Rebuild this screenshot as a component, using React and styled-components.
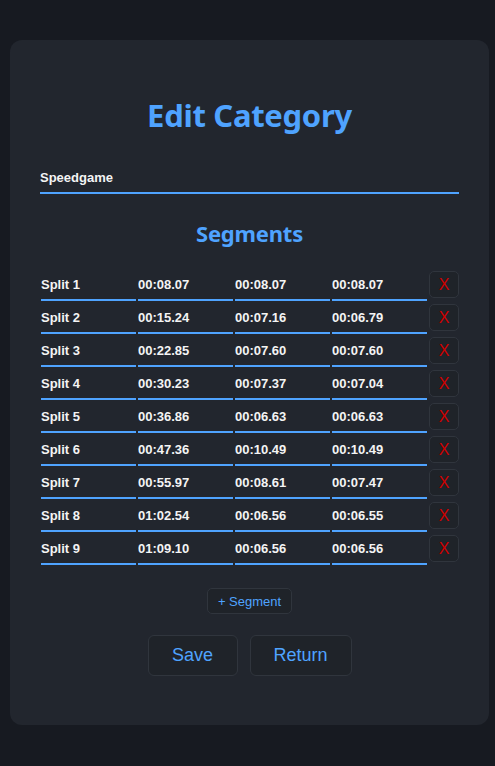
import React, { useState } from "react"
import styled, { createGlobalStyle } from "styled-components"

const GlobalStyle = createGlobalStyle`
  html, body {
    margin: 0;
    padding: 0;
    background: #171a21;
    min-height: 100%;
  }
  body {
    font-family: "Liberation Sans", Arial, sans-serif;
  }
`

const initialSplits = [
  { name: "Split 1", total: "00:08.07", seg: "00:08.07", best: "00:08.07" },
  { name: "Split 2", total: "00:15.24", seg: "00:07.16", best: "00:06.79" },
  { name: "Split 3", total: "00:22.85", seg: "00:07.60", best: "00:07.60" },
  { name: "Split 4", total: "00:30.23", seg: "00:07.37", best: "00:07.04" },
  { name: "Split 5", total: "00:36.86", seg: "00:06.63", best: "00:06.63" },
  { name: "Split 6", total: "00:47.36", seg: "00:10.49", best: "00:10.49" },
  { name: "Split 7", total: "00:55.97", seg: "00:08.61", best: "00:07.47" },
  { name: "Split 8", total: "01:02.54", seg: "00:06.56", best: "00:06.55" },
  { name: "Split 9", total: "01:09.10", seg: "00:06.56", best: "00:06.56" },
]

const App = () => {
  const [title, setTitle] = useState("Speedgame")
  const [splits, setSplits] = useState(initialSplits)

  const update = (i, key, value) => {
    setSplits(splits.map((s, j) => (j === i ? { ...s, [key]: value } : s)))
  }

  return (
    <>
      <GlobalStyle />
      <Page>
        <Card>
          <Title>Edit Category</Title>
          <NameInput value={title} onChange={e => setTitle(e.target.value)} />
          <Subtitle>Segments</Subtitle>
          <SplitList>
            {splits.map((s, i) => (
              <SplitRow key={i}>
                <Cell value={s.name} onChange={e => update(i, "name", e.target.value)} />
                <Cell value={s.total} onChange={e => update(i, "total", e.target.value)} />
                <Cell value={s.seg} onChange={e => update(i, "seg", e.target.value)} />
                <Cell value={s.best} onChange={e => update(i, "best", e.target.value)} />
                <DeleteButton onClick={() => setSplits(splits.filter((_, j) => j !== i))}>X</DeleteButton>
              </SplitRow>
            ))}
          </SplitList>
          <AddButton
            onClick={() =>
              setSplits([...splits, { name: `Split ${splits.length + 1}`, total: "", seg: "", best: "" }])
            }
          >
            + Segment
          </AddButton>
          <Actions>
            <ActionButton>Save</ActionButton>
            <ActionButton wide>Return</ActionButton>
          </Actions>
        </Card>
      </Page>
    </>
  )
}

const Page = styled.div`
  min-height: 766px;
  box-sizing: border-box;
  padding: 40px 6px 0 10px;
`

const Card = styled.div`
  width: 479px;
  box-sizing: border-box;
  background: #22262e;
  border-radius: 12px;
  padding: 55px 30px 49px;
  display: flex;
  flex-direction: column;
  align-items: center;
`

const Title = styled.h1`
  margin: 0;
  font-family: "Noto Sans", "Open Sans", sans-serif;
  font-weight: 700;
  font-size: 31px;
  line-height: 40px;
  color: #4fa3ff;
  letter-spacing: -0.3px;
`

const NameInput = styled.input`
  margin-top: 29px;
  width: 100%;
  box-sizing: border-box;
  background: transparent;
  border: none;
  border-bottom: 2px solid #4fa3ff;
  padding: 6px 0;
  font-family: "Liberation Sans", Arial, sans-serif;
  font-weight: 700;
  font-size: 13px;
  line-height: 16px;
  color: #f4f4f4;
  outline: none;
`

const Subtitle = styled.h2`
  margin: 24px 0 0;
  font-family: "Noto Sans", "Open Sans", sans-serif;
  font-weight: 700;
  font-size: 22px;
  line-height: 30px;
  color: #4fa3ff;
  letter-spacing: -0.2px;
`

const SplitList = styled.div`
  margin-top: 23px;
  width: 100%;
  display: flex;
  flex-direction: column;
  gap: 3px;
`

const SplitRow = styled.div`
  display: flex;
  align-items: center;
  gap: 2px;
  padding-left: 1px;
`

const Cell = styled.input`
  width: 95px;
  box-sizing: border-box;
  background: transparent;
  border: none;
  border-bottom: 2px solid #4fa3ff;
  padding: 6px 0;
  font-family: "Liberation Sans", Arial, sans-serif;
  font-weight: 700;
  font-size: 13px;
  line-height: 16px;
  color: #f4f4f4;
  outline: none;
`

const DeleteButton = styled.button`
  margin-top: -3px;
  width: 30px;
  height: 27px;
  box-sizing: border-box;
  background: #1f2329;
  border: 1px solid #30353d;
  border-radius: 5px;
  color: #d00000;
  font-family: "Liberation Sans", Arial, sans-serif;
  font-size: 16px;
  padding: 0;
  cursor: pointer;
`

const AddButton = styled.button`
  margin-top: 23px;
  height: 26px;
  padding: 0 10px;
  box-sizing: border-box;
  background: #1f2329;
  border: 1px solid #30353d;
  border-radius: 5px;
  color: #4fa3ff;
  font-family: "Liberation Sans", Arial, sans-serif;
  font-size: 13px;
  cursor: pointer;
`

const Actions = styled.div`
  margin-top: 21px;
  display: flex;
  gap: 12px;
`

const ActionButton = styled.button`
  width: ${p => (p.wide ? "102px" : "90px")};
  height: 41px;
  box-sizing: border-box;
  background: #1f2329;
  border: 1px solid #30353d;
  border-radius: 6px;
  color: #4fa3ff;
  font-family: "Liberation Sans", Arial, sans-serif;
  font-size: 18px;
  cursor: pointer;
`

export default App
